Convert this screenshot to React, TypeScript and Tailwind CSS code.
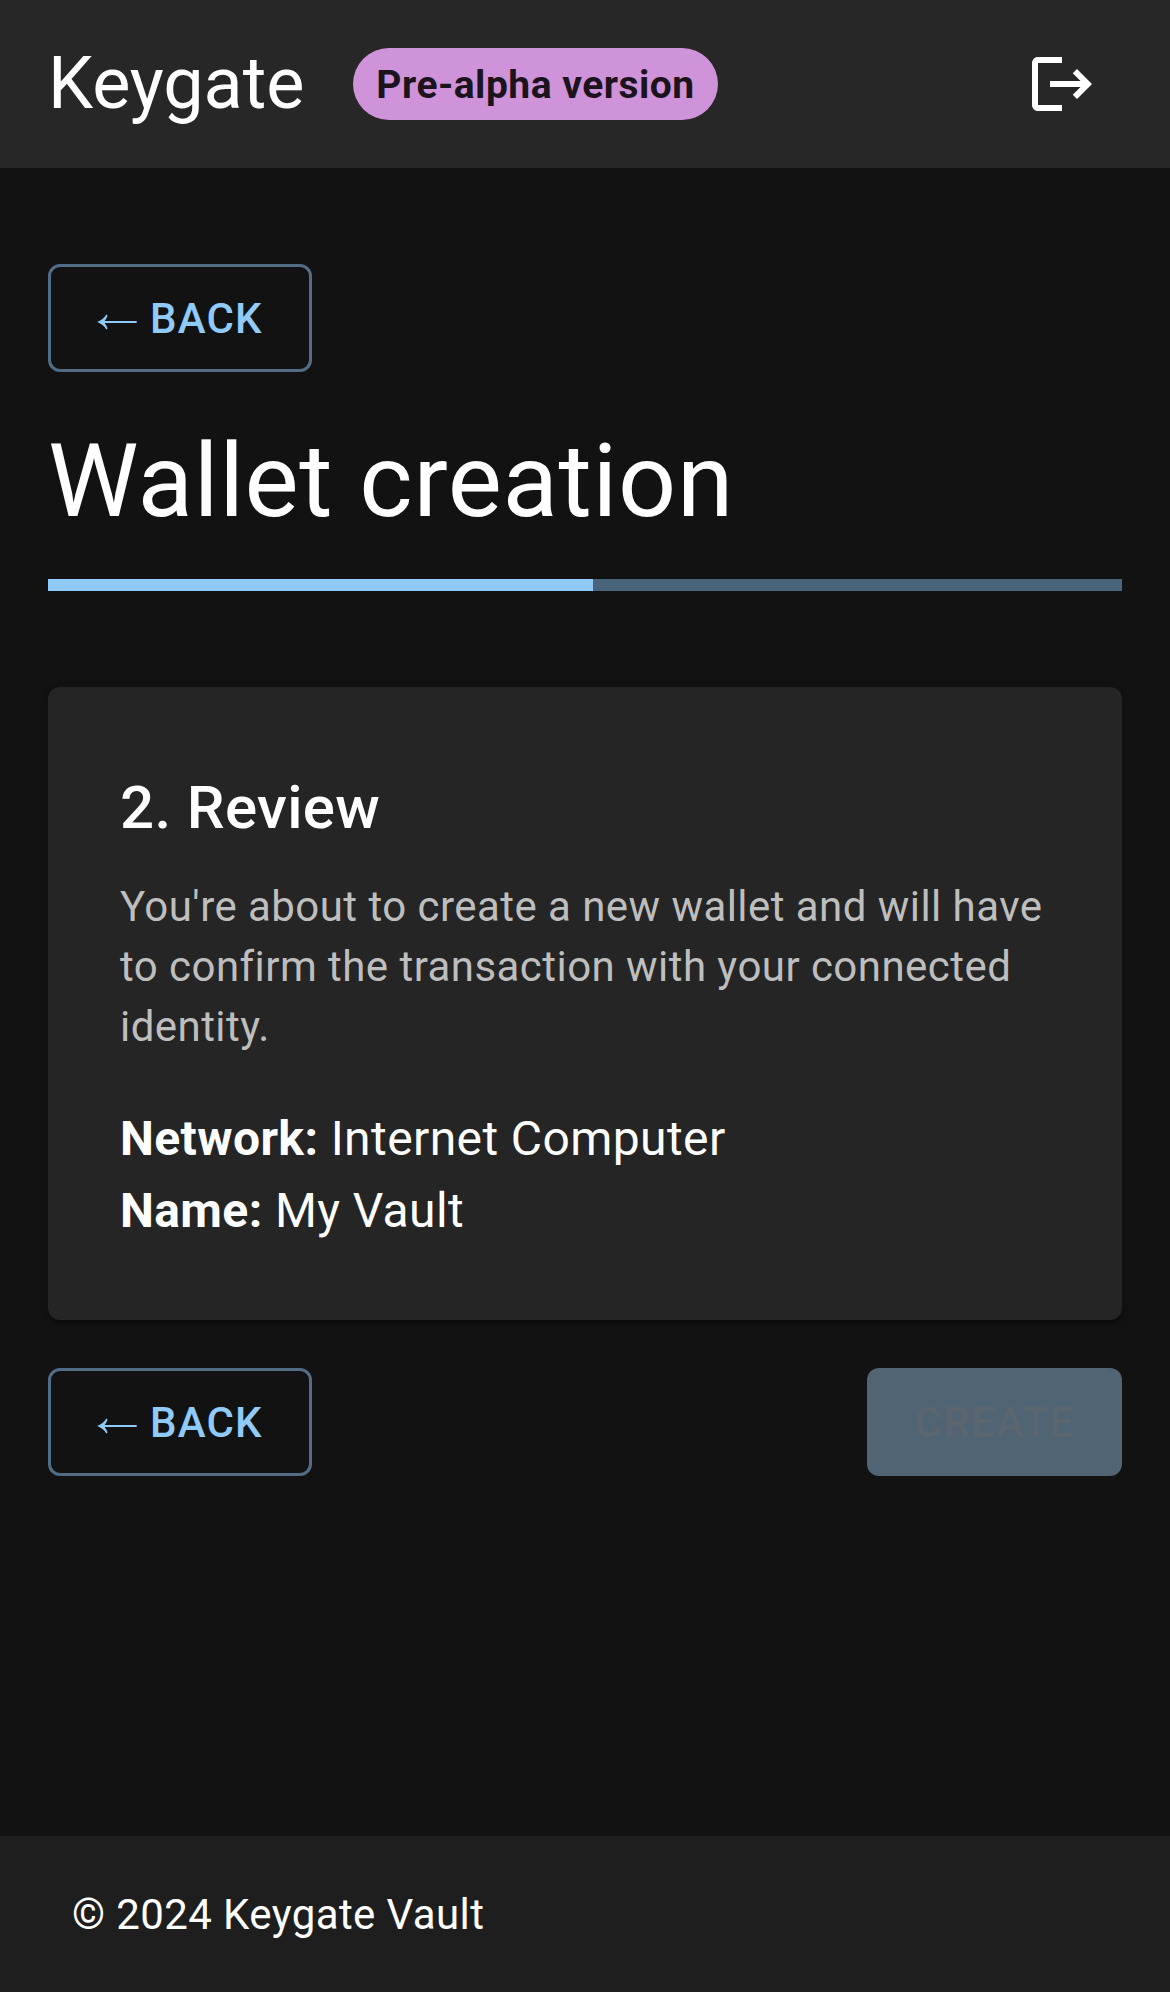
function BackButton() {
  return (
    <button className="flex h-[108px] w-[264px] items-center rounded-xl border-[3px] border-[#516d85] pl-[45px] text-[42px] leading-[73.5px] font-medium tracking-[0.02857em] text-[#90caf9]">
      <svg viewBox="0 0 42 16" className="mt-2 h-4 w-[42px] shrink-0" fill="currentColor" aria-label="←">
        <path d="M1.2 8C5.5 6.2 8.7 3.8 10.3.6L11.6 1.4C10.8 3.6 9.8 5.5 8.7 6.9H40.7V9.1H8.7C9.8 10.5 10.8 12.4 11.6 14.6L10.3 15.4C8.7 12.2 5.5 9.8 1.2 8Z" />
      </svg>
      <span className="mt-0.5 ml-[12px]">BACK</span>
    </button>
  );
}

function LogoutIcon() {
  return (
    <svg viewBox="0 0 24 24" className="size-[72px]" fill="currentColor" aria-hidden="true">
      <path d="m17 7-1.41 1.41L18.17 11H8v2h10.17l-2.58 2.58L17 17l5-5zM4 5h8V3H4c-1.1 0-2 .9-2 2v14c0 1.1.9 2 2 2h8v-2H4z" />
    </svg>
  );
}

export default function App() {
  return (
    <div className="flex h-[1992px] w-[1170px] flex-col bg-[#121212] font-['Roboto',sans-serif] text-white">
      <header className="flex h-[168px] shrink-0 items-center justify-between bg-[#272727] pr-[72px] pl-12">
        <div className="flex items-center">
          <h1 className="w-[305px] text-[72px] leading-[96px] font-normal tracking-[-0.1px]">Keygate</h1>
          <span className="flex h-[72px] w-[365px] items-center justify-center rounded-full bg-[#ce93d8] pt-0.5 text-[39px] font-bold tracking-[0.48px] text-[#1c141d]">
            Pre-alpha version
          </span>
        </div>
        <button aria-label="Log out">
          <LogoutIcon />
        </button>
      </header>

      <main className="flex grow flex-col px-12 pt-24">
        <BackButton />
        <h2 className="mt-[46px] text-[102px] leading-[126px] font-normal tracking-[0.0065em]">Wallet creation</h2>
        <div className="mt-[35px] flex h-3 bg-[#49647b]">
          <div className="w-[545px] bg-[#90caf9]" />
        </div>

        <section className="mt-24 h-[633px] rounded-xl bg-[#252525] px-[72px] pt-[73px] shadow-[0_6px_3px_-3px_rgba(0,0,0,0.2),0_3px_3px_0_rgba(0,0,0,0.14),0_3px_9px_0_rgba(0,0,0,0.12)]">
          <h3 className="text-[60px] leading-[96px] font-medium tracking-[0.006em]">2. Review</h3>
          <p className="mt-[21px] text-[42px] leading-[60px] tracking-[0.01071em] text-[#bebebe]">
            You're about to create a new wallet and will have to confirm the transaction with your connected identity.
          </p>
          <div className="mt-[46px] text-[48px] leading-[72px] tracking-[0.0084em]">
            <p>
              <b>Network:</b> Internet Computer
            </p>
            <p>
              <b>Name:</b> My Vault
            </p>
          </div>
        </section>

        <div className="mt-12 flex justify-between">
          <BackButton />
          <button
            disabled
            className="h-[108px] w-[255px] rounded-xl bg-[#516474] pt-0.5 text-[42px] leading-[73.5px] font-medium tracking-[0.02857em] text-[#5c666e]"
          >
            CREATE
          </button>
        </div>
      </main>

      <footer className="h-[156px] shrink-0 bg-[#1e1e1e] px-[72px] pt-[49px] text-[42px] leading-[60px] tracking-[0.0095em]">
        © 2024 Keygate Vault
      </footer>
    </div>
  );
}
